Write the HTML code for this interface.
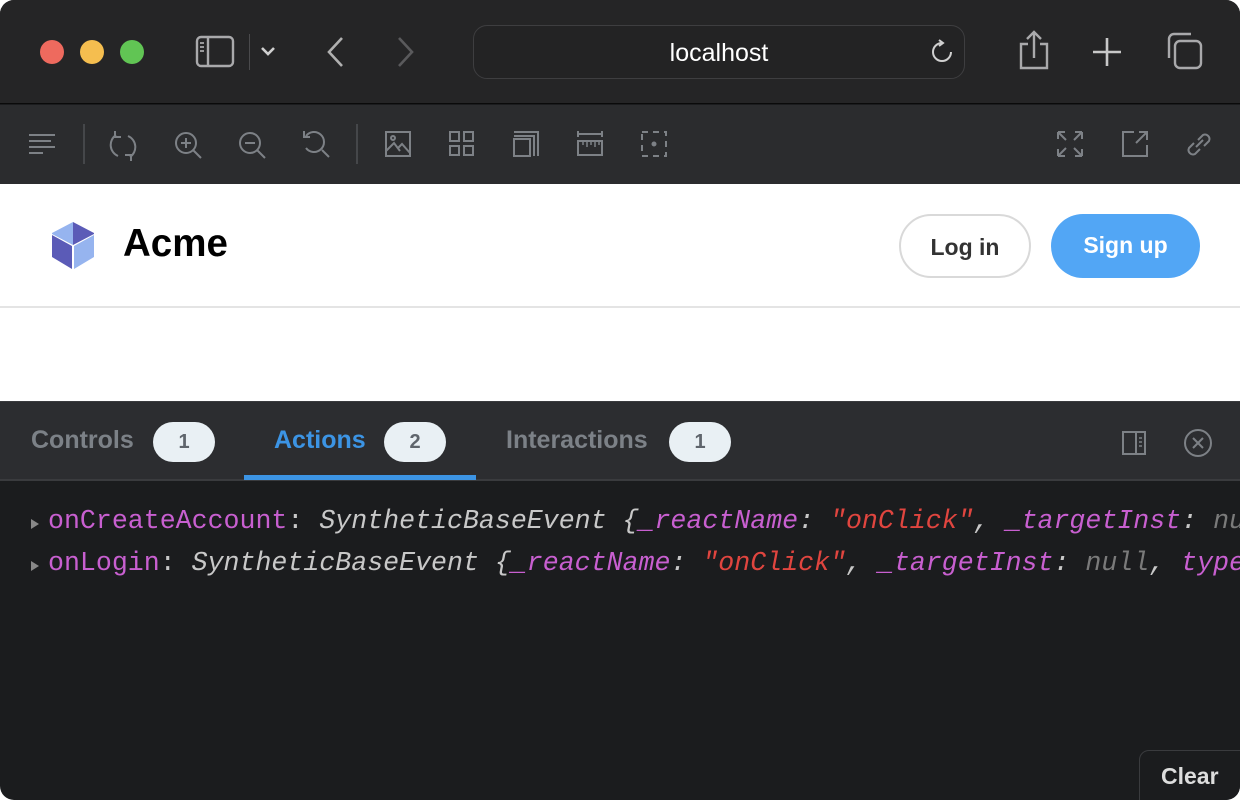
<!DOCTYPE html>
<html><head><meta charset="utf-8"><style>
*{margin:0;padding:0;box-sizing:border-box}
html,body{width:1240px;height:800px;background:#fff;overflow:hidden}
#win{position:absolute;left:0;top:0;width:1240px;height:800px;border-radius:14px;overflow:hidden;background:#1b1c1e;font-family:"Liberation Sans",sans-serif}
.abs{position:absolute}
#title{left:0;top:0;width:1240px;height:104px;background:#252526;border-bottom:1px solid #0a0a0a}
.dot{position:absolute;top:40px;width:24px;height:24px;border-radius:50%}
#url{left:473px;top:25px;width:492px;height:54px;border:1.5px solid #3e3e40;border-radius:14px;background:#232324}
#url span{position:absolute;left:0;right:0;top:13px;text-align:center;color:#fff;font-size:25px}
#tb{left:0;top:105px;width:1240px;height:79px;background:#2b2c2e}
#page{left:0;top:184px;width:1240px;height:217px;background:#fff}
#hdr{left:0;top:0;width:1240px;height:124px;border-bottom:2px solid #e4e4e4}
.btn{position:absolute;top:30px;height:64px;border-radius:32px;font-weight:bold;font-size:23px;text-align:center;line-height:62px}
#tabs{left:0;top:401px;width:1240px;height:80px;background:#2c2d30;border-top:1px solid #3a3b3e;border-bottom:2px solid #3a3b3e}
.tab{position:absolute;top:24px;font-size:25px;font-weight:bold;color:#7c8187}
.badge{position:absolute;top:20px;width:62px;height:40px;border-radius:20px;background:#e9f0f4;color:#5f656c;font-size:20px;text-align:center;line-height:40px;font-weight:bold}
.code{position:absolute;left:48px;font-family:"Liberation Mono","DejaVu Sans Mono",monospace;font-size:26.6px;color:#c8c8c8;white-space:nowrap}
.k{color:#c85fd0}.s{color:#e0453f}.n{color:#7a7a7a}.i{font-style:italic}
.tri{position:absolute;left:31px;width:0;height:0;border-left:8px solid #888;border-top:5px solid transparent;border-bottom:5px solid transparent}
#clear{left:1139px;top:750px;width:120px;height:60px;border:1.5px solid #3a3b3e;border-radius:10px;background:#1b1c1e;color:#ddd;font-size:23px;font-weight:bold;padding:12px 0 0 21px}
svg{position:absolute}
</style></head><body><div id="win">
<div id="title" class="abs">
<div class="dot" style="left:40px;background:#ee6a5e"></div>
<div class="dot" style="left:80px;background:#f5be4f"></div>
<div class="dot" style="left:120px;background:#61c554"></div>
<svg style="left:195px;top:35px" width="42" height="34" fill="none" stroke="#a9a9ab" stroke-width="2.4"><rect x="2" y="2" width="36" height="29" rx="4"/><line x1="13" y1="2" x2="13" y2="31"/><path d="M5 8h4M5 12h4M5 16h4" stroke-width="1.8"/></svg>
<div class="abs" style="left:249px;top:34px;width:1px;height:36px;background:#4a4a4c"></div>
<svg style="left:259px;top:45px" width="18" height="14" fill="none" stroke="#d0d0d0" stroke-width="2.6"><path d="M3 3l6 6 6-6"/></svg>
<svg style="left:322px;top:36px" width="26" height="32" fill="none" stroke="#b0b0b0" stroke-width="2.6"><path d="M20 2L7 16l13 14"/></svg>
<svg style="left:393px;top:36px" width="26" height="32" fill="none" stroke="#5a5a5c" stroke-width="2.6"><path d="M6 2l13 14L6 30"/></svg>
<div id="url" class="abs"><span>localhost</span>
<svg style="left:455px;top:12px" width="26" height="28" fill="none" stroke="#d0d0d0" stroke-width="2"><path d="M13 5a9 9 0 1 0 9 9"/><path d="M10 2l4 3-4 3"/></svg></div>
<svg style="left:1016px;top:28px" width="36" height="44" fill="none" stroke="#a9a9ab" stroke-width="2.4"><path d="M12 16H5v24h26V16h-7"/><path d="M18 30V4M11 11l7-7 7 7"/></svg>
<svg style="left:1090px;top:35px" width="34" height="34" fill="none" stroke="#c8c8c8" stroke-width="2.6"><path d="M17 3v28M3 17h28"/></svg>
<svg style="left:1163px;top:31px" width="42" height="40" fill="none" stroke="#a9a9ab" stroke-width="2.4"><rect x="12" y="10" width="26" height="27" rx="5"/><path d="M6 27V8a5 5 0 0 1 5-5h17"/></svg>
</div>
<div id="tb" class="abs">
<svg style="left:28px;top:26px" width="30" height="26" stroke="#7d8186" stroke-width="2"><path d="M1 4h26M1 10h22M1 16h26M1 22h14"/></svg>
<div class="abs" style="left:83px;top:19px;width:1.5px;height:40px;background:#45474a"></div>
<svg style="left:108px;top:24px" width="32" height="34" fill="none" stroke="#7d8186" stroke-width="2"><path d="M8 6a12 12 0 0 0 2 21M22 28a12 12 0 0 0-2-21"/><path d="M7 2v6h6M23 32v-6h-6"/></svg>
<svg style="left:173px;top:25px" width="32" height="32" fill="none" stroke="#7d8186" stroke-width="2"><circle cx="13" cy="13" r="10"/><path d="M20 20l8 8M13 8v10M8 13h10"/></svg>
<svg style="left:237px;top:25px" width="32" height="32" fill="none" stroke="#7d8186" stroke-width="2"><circle cx="13" cy="13" r="10"/><path d="M20 20l8 8M8 13h10"/></svg>
<svg style="left:300px;top:23px" width="32" height="34" fill="none" stroke="#7d8186" stroke-width="2"><path d="M6 8a10 10 0 1 1 0 12"/><path d="M22 22l7 7M4 3v6h6"/></svg>
<div class="abs" style="left:356px;top:19px;width:1.5px;height:40px;background:#45474a"></div>
<svg style="left:385px;top:26px" width="28" height="28" fill="none" stroke="#7d8186" stroke-width="2"><rect x="1" y="1" width="24" height="24"/><circle cx="8" cy="7" r="2"/><path d="M1 20l8-8 6 8M13 17l4-4 8 9"/></svg>
<svg style="left:449px;top:26px" width="28" height="28" fill="none" stroke="#7d8186" stroke-width="2"><rect x="1" y="1" width="9" height="9"/><rect x="15" y="1" width="9" height="9"/><rect x="1" y="15" width="9" height="9"/><rect x="15" y="15" width="9" height="9"/></svg>
<svg style="left:513px;top:26px" width="28" height="28" fill="none" stroke="#7d8186" stroke-width="2"><rect x="1" y="8" width="16" height="17"/><path d="M1 5h20v20M1 1h24v24"/></svg>
<svg style="left:577px;top:26px" width="28" height="28" fill="none" stroke="#7d8186" stroke-width="2"><path d="M1 3h24M1 0v6M25 0v6"/><rect x="1" y="10" width="24" height="14"/><path d="M6 10v4M10 10v6M14 10v4M18 10v6M22 10v4" stroke-width="1.5"/></svg>
<svg style="left:641px;top:26px" width="28" height="28" fill="none" stroke="#7d8186" stroke-width="2"><rect x="1" y="1" width="24" height="24" stroke-dasharray="6 5"/><circle cx="13" cy="13" r="1.5" fill="#7d8186"/></svg>
<svg style="left:1057px;top:26px" width="28" height="28" fill="none" stroke="#7d8186" stroke-width="2"><path d="M1 1l8 8M1 1v7M1 1h7M25 1l-8 8M25 1v7M25 1h-7M1 25l8-8M1 25v-7M1 25h7M25 25l-8-8M25 25v-7M25 25h-7"/></svg>
<svg style="left:1122px;top:26px" width="28" height="28" fill="none" stroke="#7d8186" stroke-width="2"><path d="M12 1H1v24h24V14M14 12L25 1M17 1h8v8"/></svg>
<svg style="left:1184px;top:24px" width="30" height="32" fill="none" stroke="#7d8186" stroke-width="2"><path d="M12 18l7-7"/><path d="M10 14l-5 5a4.5 4.5 0 0 0 6 6l5-5M20 17l5-5a4.5 4.5 0 0 0-6-6l-5 5"/></svg>
</div>
<div id="page" class="abs">
<div id="hdr" class="abs">
<svg style="left:50px;top:37px" width="46" height="50"><polygon points="23,1 45,13 23,25 1,13" fill="#fff"/><polygon points="23,1 44,12 44,13 23,24" fill="#5b5bb7"/><polygon points="23,1 2,12 2,13 23,24" fill="#96b4ef"/><polygon points="2,14 22,25 22,48 2,36" fill="#5b5bb7"/><polygon points="44,14 24,25 24,48 44,36" fill="#96b4ef"/></svg>
<div class="abs" style="left:123px;top:38px;font-size:38.5px;font-weight:bold;color:#000">Acme</div>
<div class="btn" style="left:899px;width:132px;border:2px solid #d9d9d9;color:#333">Log in</div>
<div class="btn" style="left:1051px;width:149px;background:#52a6f5;color:#fff">Sign up</div>
</div></div>
<div id="tabs" class="abs">
<div class="tab" style="left:31px">Controls</div><div class="badge" style="left:153px">1</div>
<div class="tab" style="left:274px;color:#3c94e4">Actions</div><div class="badge" style="left:384px">2</div>
<div class="abs" style="left:244px;top:73px;width:232px;height:5px;background:#3c94e4"></div>
<div class="tab" style="left:506px">Interactions</div><div class="badge" style="left:669px">1</div>
<svg style="left:1121px;top:28px" width="28" height="28" fill="none" stroke="#7d8186" stroke-width="2"><rect x="2" y="2" width="22" height="22"/><path d="M15 2v22"/><path d="M18 8h3M18 12h3M18 16h3" stroke-width="1.6"/></svg>
<svg style="left:1183px;top:26px" width="32" height="32" fill="none" stroke="#7d8186" stroke-width="2"><circle cx="15" cy="15" r="13"/><path d="M10 10l10 10M20 10l-10 10"/></svg>
</div>
<div class="tri" style="top:519px"></div>
<div class="code" style="top:506px"><span class="k">onCreateAccount</span>: <span class="i">SyntheticBaseEvent {<span class="k">_reactName</span>: <span class="s">"onClick"</span>, <span class="k">_targetInst</span>: <span class="n">null</span>, <span class="k">type</span></span></div>
<div class="tri" style="top:561px"></div>
<div class="code" style="top:548px"><span class="k">onLogin</span>: <span class="i">SyntheticBaseEvent {<span class="k">_reactName</span>: <span class="s">"onClick"</span>, <span class="k">_targetInst</span>: <span class="n">null</span>, <span class="k">type</span>: </span></div>
<div id="clear" class="abs">Clear</div>
</div></body></html>
